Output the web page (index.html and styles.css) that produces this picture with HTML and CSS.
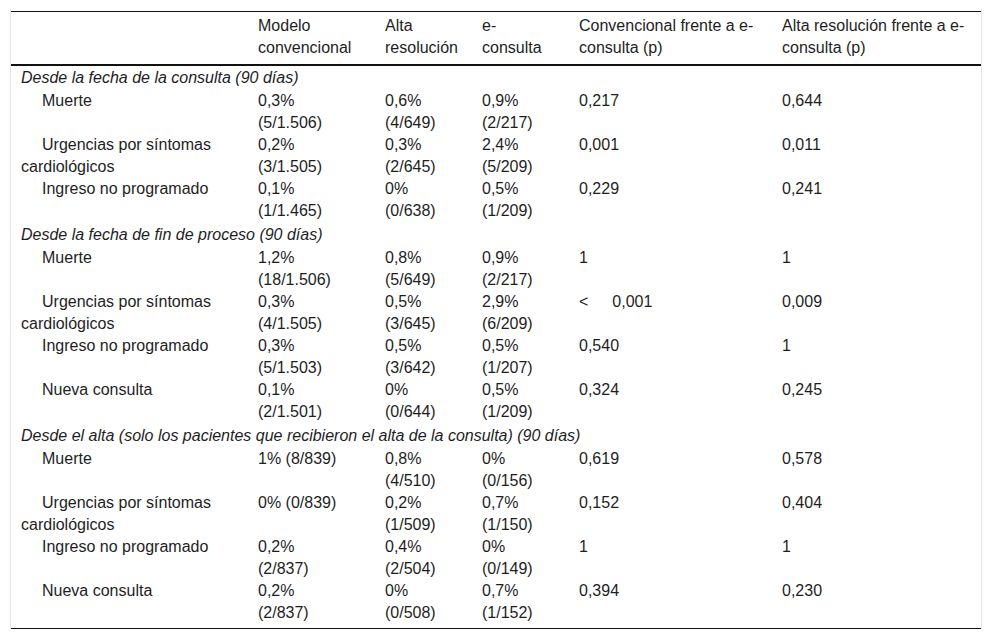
FILE: index.html
```html
<!DOCTYPE html>
<html lang="es">
<head>
<meta charset="utf-8">
<title>Tabla</title>
<link rel="stylesheet" href="styles.css">
</head>
<body>
<div class="table-wrap">
<table class="data">
  <colgroup>
    <col class="c1"><col class="c2"><col class="c3"><col class="c4"><col class="c5"><col class="c6">
  </colgroup>
  <thead>
    <tr>
      <th></th>
      <th>Modelo convencional</th>
      <th>Alta resolución</th>
      <th>e-consulta</th>
      <th>Convencional frente a e-consulta (p)</th>
      <th>Alta resolución frente a e-consulta (p)</th>
    </tr>
  </thead>
  <tbody>
    <tr class="section"><td colspan="6">Desde la fecha de la consulta (90 días)</td></tr>
    <tr><td class="sub">Muerte</td><td>0,3% (5/1.506)</td><td>0,6% (4/649)</td><td>0,9% (2/217)</td><td>0,217</td><td>0,644</td></tr>
    <tr><td class="sub">Urgencias por síntomas cardiológicos</td><td>0,2% (3/1.505)</td><td>0,3% (2/645)</td><td>2,4% (5/209)</td><td>0,001</td><td>0,011</td></tr>
    <tr><td class="sub">Ingreso no programado</td><td>0,1% (1/1.465)</td><td>0% (0/638)</td><td>0,5% (1/209)</td><td>0,229</td><td>0,241</td></tr>
    <tr class="section"><td colspan="6">Desde la fecha de fin de proceso (90 días)</td></tr>
    <tr><td class="sub">Muerte</td><td>1,2% (18/1.506)</td><td>0,8% (5/649)</td><td>0,9% (2/217)</td><td>1</td><td>1</td></tr>
    <tr><td class="sub">Urgencias por síntomas cardiológicos</td><td>0,3% (4/1.505)</td><td>0,5% (3/645)</td><td>2,9% (6/209)</td><td>&lt;&emsp;&ensp;0,001</td><td>0,009</td></tr>
    <tr><td class="sub">Ingreso no programado</td><td>0,3% (5/1.503)</td><td>0,5% (3/642)</td><td>0,5% (1/207)</td><td>0,540</td><td>1</td></tr>
    <tr><td class="sub">Nueva consulta</td><td>0,1% (2/1.501)</td><td>0% (0/644)</td><td>0,5% (1/209)</td><td>0,324</td><td>0,245</td></tr>
    <tr class="section"><td colspan="6">Desde el alta (solo los pacientes que recibieron el alta de la consulta) (90 días)</td></tr>
    <tr><td class="sub">Muerte</td><td>1% (8/839)</td><td>0,8% (4/510)</td><td>0% (0/156)</td><td>0,619</td><td>0,578</td></tr>
    <tr><td class="sub">Urgencias por síntomas cardiológicos</td><td>0% (0/839)</td><td>0,2% (1/509)</td><td>0,7% (1/150)</td><td>0,152</td><td>0,404</td></tr>
    <tr><td class="sub">Ingreso no programado</td><td>0,2% (2/837)</td><td>0,4% (2/504)</td><td>0% (0/149)</td><td>1</td><td>1</td></tr>
    <tr><td class="sub">Nueva consulta</td><td>0,2% (2/837)</td><td>0% (0/508)</td><td>0,7% (1/152)</td><td>0,394</td><td>0,230</td></tr>
  </tbody>
</table>
</div>
</body>
</html>
```

FILE: styles.css
```css
html, body {
  margin: 0;
  padding: 0;
  background: #fff;
}

body {
  font-family: "Liberation Sans", Arial, sans-serif;
  font-size: 16px;
  color: #1e1e1e;
}

.table-wrap {
  margin: 9px 10px 0 10px;
  width: 970px;
  padding-top: 2px;
  border-left: 1px solid #e6e6e6;
  border-right: 1px solid #e6e6e6;
}

.data {
  width: 970px;
  table-layout: fixed;
  border-collapse: collapse;
  border-top: 1px solid #111;
  border-bottom: 1px solid #111;
}

.c1 { width: 237px; }
.c2 { width: 127px; }
.c3 { width: 97px; }
.c4 { width: 97px; }
.c5 { width: 203px; }
.c6 { width: 209px; }

.data th,
.data td {
  text-align: left;
  vertical-align: top;
  line-height: 22px;
  padding: 0 10px;
}

.data th {
  font-weight: normal;
  vertical-align: bottom;
  padding-top: 3px;
  padding-bottom: 5px;
  border-bottom: 2px solid #111;
}

.data tr > :nth-child(2) { padding-right: 27px; }
.data tr > :nth-child(3) { padding-right: 12px; }
.data tr > :nth-child(4) { padding-right: 21px; }
.data tr > :nth-child(5) { padding-right: 5px; }
.data tr > :nth-child(6) { padding-right: 9px; }

.section td {
  font-style: italic;
  padding-top: 2px;
  padding-bottom: 1px;
}

.data tbody tr:first-child td {
  padding-top: 1px;
}

.data tbody tr:last-child td {
  padding-bottom: 4px;
}

.sub {
  text-indent: 21px;
}
```
